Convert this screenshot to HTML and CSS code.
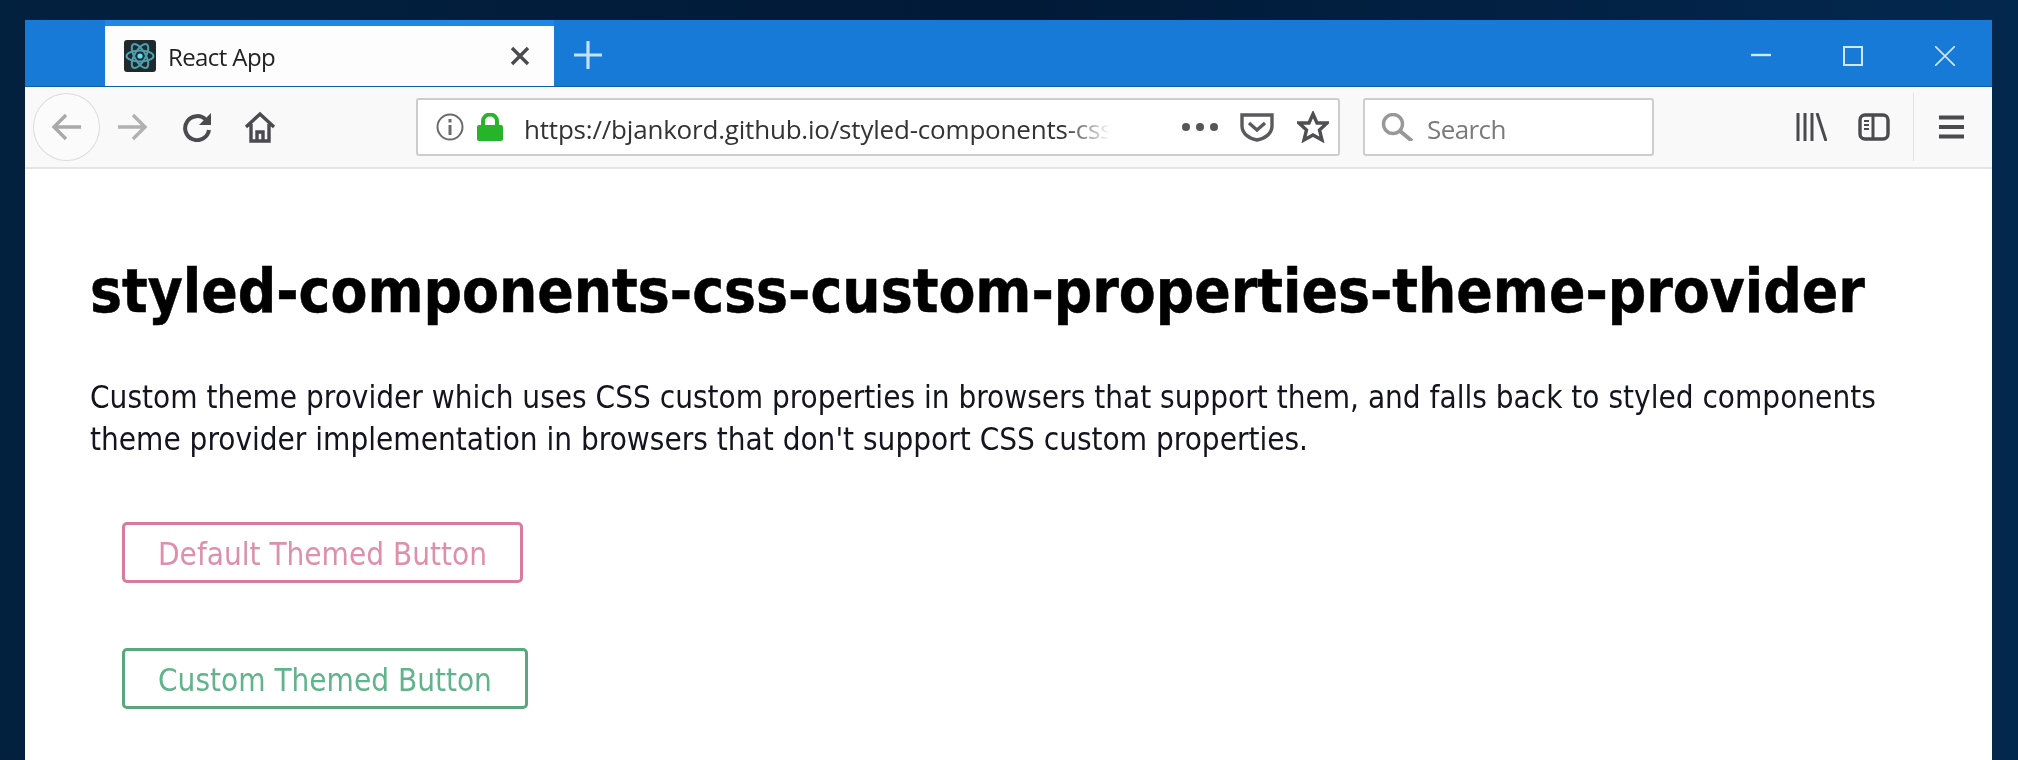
FILE: index.html
```html
<!DOCTYPE html>
<html lang="en">
<head>
    <meta charset="UTF-8">
    <title>React App</title>
    <link rel="stylesheet" href="styles.css">
</head>
<body>
    <div class="window">
        <div class="tabbar">
            <div class="tab">
                <svg class="favicon" viewBox="0 0 32 32">
                    <rect width="32" height="32" rx="3" fill="#1f2a2d"/>
                    <g fill="none" stroke="#4f9fae" stroke-width="2">
                        <ellipse cx="16" cy="16" rx="13.500" ry="5.500"/>
                        <ellipse cx="16" cy="16" rx="13.500" ry="5.500" transform="rotate(60 16 16)"/>
                        <ellipse cx="16" cy="16" rx="13.500" ry="5.500" transform="rotate(-60 16 16)"/>
                    </g>
                    <circle cx="16" cy="16" r="2.600" fill="#61dafb"/>
                </svg>
                <span class="tab-title">React App</span>
                <svg class="tab-close" viewBox="0 0 20 20">
                    <path d="M2 2 18 18M18 2 2 18" stroke="#4a4a4f" stroke-width="3.400" fill="none"/>
                </svg>
            </div>
            <svg class="new-tab" viewBox="0 0 28 28">
                <path d="M14 0V28M0 14H28" stroke="#c4e2fa" stroke-width="3.200" fill="none"/>
            </svg>
            <div class="win-controls">
                <svg viewBox="0 0 20 20"><path d="M0 9H20" stroke="#cfe8fb" stroke-width="2.400"/></svg>
                <svg viewBox="0 0 20 20"><rect x="1" y="1" width="18" height="18" fill="none" stroke="#cfe8fb" stroke-width="2"/></svg>
                <svg viewBox="0 0 20 20"><path d="M0 0 20 20M20 0 0 20" stroke="#cfe8fb" stroke-width="1.600" fill="none"/></svg>
            </div>
        </div>

        <div class="toolbar">
            <div class="back-btn">
                <svg class="icon-arrow" viewBox="0 0 32 28">
                    <path d="M30 14H3M15 2 3 14 15 26" stroke="#a9a9ab" stroke-width="3.400" fill="none"/>
                </svg>
            </div>
            <svg class="icon-arrow forward" viewBox="0 0 32 28">
                <path d="M2 14H29M17 2 29 14 17 26" stroke="#b1b1b3" stroke-width="3.400" fill="none"/>
            </svg>
            <svg class="icon-reload" viewBox="0 0 30 30">
                <path d="M24 8A12 12 0 1 0 27 18" stroke="#4a4a4f" stroke-width="4" fill="none"/>
                <path d="M29 1V13H17Z" fill="#4a4a4f"/>
            </svg>
            <svg class="icon-home" viewBox="0 0 32 32">
                <path d="M2 16 16 3 30 16M7 13V30H25V13M13 30V21H19V30" stroke="#4a4a4f" stroke-width="3.400" fill="none"/>
            </svg>

            <div class="urlbar">
                <svg class="icon-info" viewBox="0 0 28 28">
                    <circle cx="14" cy="14" r="12.500" fill="none" stroke="#6b6b6e" stroke-width="2"/>
                    <path d="M14 12V22" stroke="#6b6b6e" stroke-width="3"/>
                    <path d="M14 6V9.500" stroke="#6b6b6e" stroke-width="3"/>
                </svg>
                <svg class="icon-lock" viewBox="0 0 26 28">
                    <path d="M6 13V8A7 6.500 0 0 1 20 8V13" fill="none" stroke="#27b42a" stroke-width="4"/>
                    <rect y="12" width="26" height="16" rx="2" fill="#27b42a"/>
                </svg>
                <div class="url-text">https://bjankord.github.io/styled-components-css-custom-properties</div>
                <div class="url-dots"><span></span><span></span><span></span></div>
                <svg class="icon-pocket" viewBox="0 0 34 30">
                    <path d="M2 3H32V14C32 22 24 27 17 28 10 27 2 22 2 14Z" fill="none" stroke="#5a5a5e" stroke-width="3.400"/>
                    <path d="M9 11 17 18 25 11" fill="none" stroke="#5a5a5e" stroke-width="3.400"/>
                </svg>
                <svg class="icon-star" viewBox="0 0 32 32">
                    <path d="M16 3 20 12H30L22.500 19 25 29 16 24 7 29 9.500 19 2 12H12Z" fill="none" stroke="#4f4f53" stroke-width="3.400"/>
                </svg>
            </div>

            <div class="searchbar">
                <svg class="icon-search" viewBox="0 0 32 28">
                    <circle cx="12" cy="11" r="9.500" fill="none" stroke="#98989a" stroke-width="3.400"/>
                    <path d="M19 18 31 28" stroke="#98989a" stroke-width="4"/>
                </svg>
                <span class="search-text">Search</span>
            </div>

            <svg class="icon-library" viewBox="0 0 31 28">
                <path d="M2 0V28M9 0V28M16 0V28M21 0 30 28" stroke="#4a4a4f" stroke-width="3" fill="none"/>
            </svg>
            <svg class="icon-sidebar" viewBox="0 0 32 28">
                <rect x="2" y="2" width="28" height="24" rx="5" fill="none" stroke="#4a4a4f" stroke-width="3.400"/>
                <path d="M15 2V26" stroke="#4a4a4f" stroke-width="3"/>
                <path d="M6 8H11M6 12H11M6 16H11" stroke="#4a4a4f" stroke-width="2"/>
            </svg>
            <div class="toolbar-sep"></div>
            <svg class="icon-menu" viewBox="0 0 25 24">
                <path d="M0 2.500H25M0 12H25M0 21.500H25" stroke="#4a4a4f" stroke-width="3.800"/>
            </svg>
        </div>

        <div class="page">
            <h1>styled-components-css-custom-properties-theme-provider</h1>
            <p>Custom theme provider which uses CSS custom properties in browsers that support them, and falls back to styled components theme provider implementation in browsers that don't support CSS custom properties.</p>
            <div class="buttons">
                <button class="btn btn-default">Default Themed Button</button>
                <button class="btn btn-custom">Custom Themed Button</button>
            </div>
        </div>
    </div>
</body>
</html>
```

FILE: styles.css
```css
html, body {
    margin: 0;
    height: 100%;
    overflow: hidden;
}
body {
    box-sizing: border-box;
    padding: 20px 26px 0 25px;
    background: linear-gradient(90deg, #02213f 0%, #011a38 50%, #03284e 100%);
}
svg {
    display: block;
    flex: none;
}
.window {
    height: 740px;
    display: flex;
    flex-direction: column;
    background-color: #fff;
    filter: blur(0.5px);
}

/* tab strip */
.tabbar {
    height: 67px;
    box-sizing: border-box;
    padding-left: 80px;
    display: flex;
    background-color: #167ad6;
    border-bottom: 1px solid #0f5fa8;
}
.tab {
    width: 449px;
    box-sizing: border-box;
    padding: 0 24px 0 19px;
    display: flex;
    align-items: center;
    background-color: #fdfdfd;
    border-top: 6px solid #2187e6;
}
.favicon {
    width: 32px;
    height: 32px;
}
.tab-title {
    margin-left: 12px;
    flex: 1;
    font: 24px "Open Sans", sans-serif;
    letter-spacing: -0.6px;
    color: #222;
}
.tab-close {
    width: 20px;
    height: 20px;
}
.new-tab {
    width: 28px;
    height: 28px;
    margin: 21px 0 0 20px;
}
.win-controls {
    margin-left: auto;
    padding: 26px 37px 0 0;
    display: flex;
    gap: 72px;
}
.win-controls svg {
    width: 20px;
    height: 20px;
}

/* nav bar */
.toolbar {
    height: 82px;
    box-sizing: border-box;
    padding: 0 26px 0 8px;
    display: flex;
    align-items: center;
    background-color: #f9f9fa;
    border-bottom: 2px solid #e4e4e5;
}
.back-btn {
    width: 65px;
    height: 66px;
    display: flex;
    align-items: center;
    justify-content: center;
    background-color: #fbfbfb;
    border: 1px solid #dcdcdc;
    border-radius: 50%;
}
.icon-arrow {
    width: 32px;
    height: 28px;
}
.forward {
    margin-left: 16px;
}
.icon-reload {
    width: 30px;
    height: 30px;
    margin-left: 34px;
}
.icon-home {
    width: 32px;
    height: 32px;
    margin-left: 32px;
}
.urlbar, .searchbar {
    height: 58px;
    box-sizing: border-box;
    display: flex;
    align-items: center;
    background-color: #fff;
    border: 2px solid #cdcdcd;
    border-radius: 3px;
}
.urlbar {
    width: 924px;
    margin-left: 140px;
    padding-left: 18px;
}
.icon-info {
    width: 28px;
    height: 28px;
}
.icon-lock {
    width: 26px;
    height: 28px;
    margin-left: 13px;
}
.url-text {
    width: 586px;
    margin: 4px 0 0 21px;
    overflow: hidden;
    white-space: nowrap;
    font: 26px "Open Sans", sans-serif;
    letter-spacing: -0.2px;
    color: #333;
    -webkit-mask-image: linear-gradient(90deg, #000 92%, transparent 100%);
    mask-image: linear-gradient(90deg, #000 92%, transparent 100%);
}
.url-dots {
    margin-left: 72px;
    display: flex;
    gap: 6px;
}
.url-dots span {
    width: 8px;
    height: 8px;
    border-radius: 50%;
    background-color: #555;
}
.icon-pocket {
    width: 34px;
    height: 30px;
    margin-left: 22px;
}
.icon-star {
    width: 32px;
    height: 32px;
    margin-left: 23px;
}
.searchbar {
    width: 291px;
    margin-left: 23px;
    padding-left: 16px;
}
.icon-search {
    width: 32px;
    height: 28px;
}
.search-text {
    margin: 4px 0 0 14px;
    font: 26px "Open Sans", sans-serif;
    letter-spacing: -0.6px;
    color: #7b7b7d;
}
.icon-library {
    width: 31px;
    height: 28px;
    margin-left: 142px;
}
.icon-sidebar {
    width: 32px;
    height: 28px;
    margin-left: 31px;
}
.toolbar-sep {
    width: 1px;
    height: 68px;
    margin-left: 23px;
    background-color: #e2e2e3;
}
.icon-menu {
    width: 25px;
    height: 24px;
    margin-left: 25px;
}

/* page content */
.page {
    flex: 1;
    padding: 86px 65px 0;
    color: #14141e;
    font-family: "DejaVu Sans", sans-serif;
    font-stretch: condensed;
}
h1 {
    margin: 0;
    font-size: 59.800px;
    line-height: 72px;
    font-weight: bold;
    color: #000;
    white-space: nowrap;
    -webkit-text-stroke: 0.5px #000;
}
p {
    margin: 49px 0 0;
    max-width: 1810px;
    font-size: 31.200px;
    line-height: 42px;
}
.buttons {
    margin-top: 62px;
    padding-left: 32px;
    display: flex;
    flex-direction: column;
    align-items: flex-start;
    gap: 65px;
}
.btn {
    height: 61px;
    padding: 2px 33px 0;
    background-color: #fff;
    border: 3px solid;
    border-radius: 5px;
    font: inherit;
    font-size: 31.200px;
    font-stretch: condensed;
}
.btn-default {
    color: #de8fab;
    border-color: #d67c9c;
}
.btn-custom {
    color: #60b48b;
    border-color: #56a97f;
}
```
